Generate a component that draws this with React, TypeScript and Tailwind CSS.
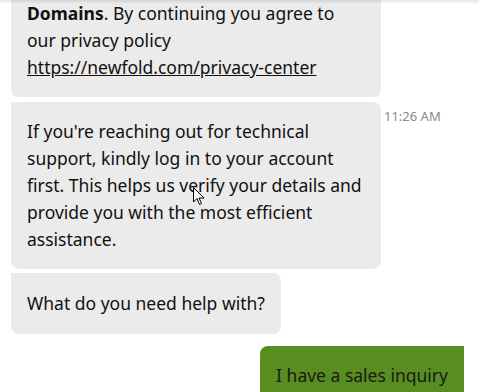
const font = { fontFamily: '"Noto Sans", "Open Sans", sans-serif' };

function AgentBubble({ children, first }: { children: React.ReactNode; first?: boolean }) {
  return (
    <div
      className={
        'w-[370px] bg-[#ebebeb] px-4 py-4 text-[17.5px] leading-[27px] text-[#111] rounded-lg ' +
        (first ? '' : 'rounded-tl-none')
      }
    >
      {children}
    </div>
  );
}

export default function App() {
  return (
    <div className="relative h-[392px] w-[479px] overflow-hidden bg-white" style={font}>
      <div className="pointer-events-none absolute inset-x-0 top-0 z-10 h-[4px] bg-gradient-to-b from-black/10 to-transparent" />

      <div className="mt-[-97px] flex flex-col pl-[11px] pr-[15px]">
        <AgentBubble first>
          Hi there! We support Bluehost, HostGator, Web.com,
          <br />
          Network Solutions, Register.com and
          <br />
          <b>Domains</b>. By continuing you agree to our privacy policy{' '}
          <a href="#" className="underline">
            https://newfold.com/privacy-center
          </a>
        </AgentBubble>

        <div className="mt-[5px] flex items-start gap-[3px]">
          <div className="relative">
            <AgentBubble>
              If you're reaching out for technical support, kindly log in to your account first. This
              helps us verify your details and provide you with the most efficient assistance.
            </AgentBubble>
            {/* mouse pointer caught in the screenshot */}
            <svg
              className="absolute left-[182px] top-[85px]"
              width="12"
              height="19"
              viewBox="0 0 12 19"
            >
              <path
                d="M0.5 0.5 L0.5 15 L4 11.5 L6.5 17.5 L8.5 16.5 L6 11 L11 11 Z"
                fill="white"
                stroke="black"
                strokeWidth="1"
                strokeLinejoin="round"
              />
            </svg>
          </div>
          <span className="mt-[5px] whitespace-nowrap text-[13px] text-[#8a8a8a]">11:26 AM</span>
        </div>

        <div className="mt-[4px] self-start rounded-lg rounded-tl-none bg-[#ebebeb] px-4 py-[17px] text-[17.5px] leading-[27px] text-[#111]">
          What do you need help with?
        </div>

        <div className="mt-[12px] self-end rounded-lg rounded-tr-none bg-[#578e1f] px-4 py-4 text-[17.5px] leading-[27px] text-[#1a1a1a]">
          I have a sales inquiry
        </div>
      </div>
    </div>
  );
}
